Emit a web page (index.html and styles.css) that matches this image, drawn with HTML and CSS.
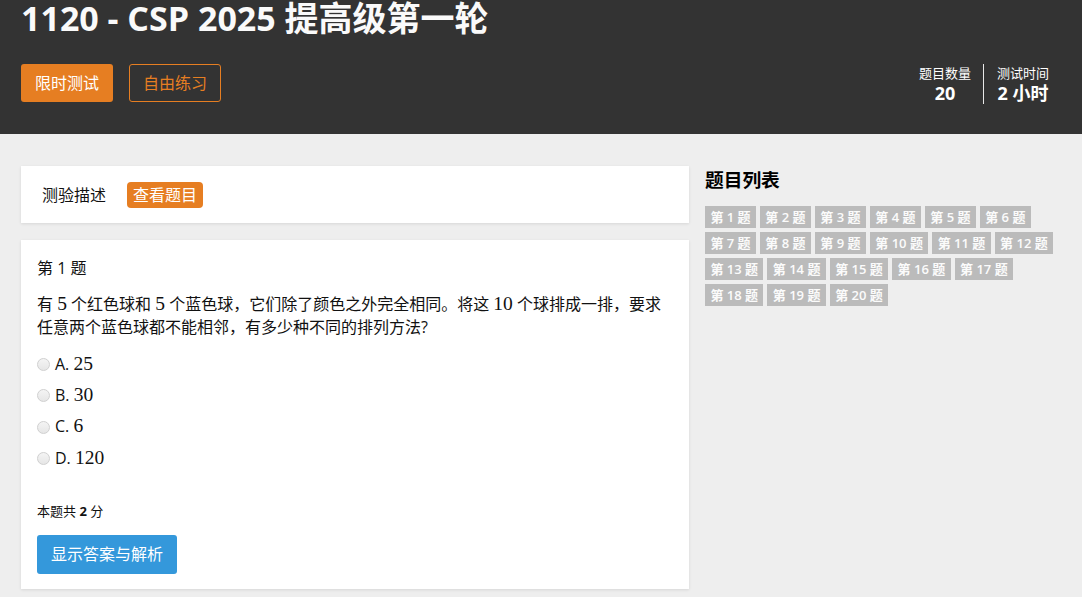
FILE: index.html
```html
<!DOCTYPE html>
<html lang="zh-CN">
<head>
<meta charset="utf-8">
<title>1120 - CSP 2025 提高级第一轮</title>
<link rel="stylesheet" href="styles.css">
</head>
<body>
<header class="hero">
  <h1 class="hero-title">1120 - CSP 2025 提高级第一轮</h1>
  <div class="hero-row">
    <div class="hero-actions">
      <button class="btn btn-solid">限时测试</button>
      <button class="btn btn-outline">自由练习</button>
    </div>
    <div class="stats">
      <div class="stat">
        <div class="stat-label">题目数量</div>
        <div class="stat-value">20</div>
      </div>
      <div class="stat stat-last">
        <div class="stat-label">测试时间</div>
        <div class="stat-value">2 小时</div>
      </div>
    </div>
  </div>
</header>
<main class="page">
  <section class="main-col">
    <div class="card tabs">
      <span class="tab">测验描述</span>
      <span class="tab tab-active">查看题目</span>
    </div>
    <div class="card question">
      <div class="q-title">第 1 题</div>
      <p class="q-text">有 <span class="m">5</span> 个红色球和 <span class="m">5</span> 个蓝色球，它们除了颜色之外完全相同。将这 <span class="m">10</span> 个球排成一排，要求任意两个蓝色球都不能相邻，有多少种不同的排列方法?</p>
      <div class="options">
        <label class="option"><input type="radio" name="q1"><span>A. <span class="m">25</span></span></label>
        <label class="option"><input type="radio" name="q1"><span>B. <span class="m">30</span></span></label>
        <label class="option"><input type="radio" name="q1"><span>C. <span class="m">6</span></span></label>
        <label class="option"><input type="radio" name="q1"><span>D. <span class="m">120</span></span></label>
      </div>
      <div class="score">本题共 <b>2</b> 分</div>
      <button class="btn btn-blue">显示答案与解析</button>
    </div>
  </section>
  <aside class="side-col">
    <h3 class="side-title">题目列表</h3>
    <div class="tags">
      <span class="tag">第 1 题</span><span class="tag">第 2 题</span><span class="tag">第 3 题</span><span class="tag">第 4 题</span><span class="tag">第 5 题</span><span class="tag">第 6 题</span><span class="tag">第 7 题</span><span class="tag">第 8 题</span><span class="tag">第 9 题</span><span class="tag">第 10 题</span><span class="tag">第 11 题</span><span class="tag">第 12 题</span><span class="tag">第 13 题</span><span class="tag">第 14 题</span><span class="tag">第 15 题</span><span class="tag">第 16 题</span><span class="tag">第 17 题</span><span class="tag">第 18 题</span><span class="tag">第 19 题</span><span class="tag">第 20 题</span>
    </div>
  </aside>
</main>
</body>
</html>
```

FILE: styles.css
```css
* { box-sizing: border-box; }
html, body { margin: 0; padding: 0; }
body {
  font-family: "Open Sans", "Noto Sans CJK SC", sans-serif;
  background: #eeeeee;
  color: #111;
  width: 1082px;
  height: 597px;
  overflow: hidden;
}

.hero {
  background: #333333;
  color: #fff;
  height: 134px;
  padding: 0 21px;
}
.hero-title {
  margin: 0;
  font-size: 34px;
  line-height: 36px;
  font-weight: 700;
  color: #fafafa;
}
.hero-row {
  margin-top: 26px;
  display: flex;
  align-items: center;
  justify-content: space-between;
}
.hero-actions { display: flex; gap: 16px; }

.btn {
  font-family: "Open Sans", "Noto Sans CJK SC", sans-serif;
  font-size: 16px;
  line-height: 22px;
  border-radius: 3px;
  cursor: pointer;
}
.btn-solid {
  background: #e67e22;
  color: #fff;
  border: 0;
  padding: 8px 14px;
}
.btn-outline {
  background: transparent;
  color: #e67e22;
  border: 1px solid #e67e22;
  padding: 7px 13px;
}
.btn-blue {
  background: #3498db;
  color: #fff;
  border: 0;
  padding: 8px 14px;
  line-height: 23px;
}

.stats { display: flex; margin-top: 2px; }
.stat {
  text-align: center;
  padding: 0 12px 0 13px;
}
.stat + .stat { border-left: 1px solid #e8e8e8; padding-left: 13px; }
.stat-last { padding-right: 12px; }
.stat-label { font-size: 13px; line-height: 18px; }
.stat-value { font-size: 18px; line-height: 22px; font-weight: 700; }

.page {
  display: flex;
  gap: 16px;
  padding: 32px 21px 0;
  align-items: flex-start;
}
.main-col { width: 668px; flex: none; }
.side-col { flex: 1; }

.card {
  background: #fff;
  box-shadow: 0 1px 3px rgba(0,0,0,0.10);
}
.tabs {
  height: 57px;
  display: flex;
  align-items: center;
  padding: 0 21px;
}
.tab { font-size: 16px; line-height: 22px; }
.tab-active {
  margin-left: 21px;
  background: #e67e22;
  color: #fff;
  border-radius: 4px;
  padding: 2px 6px 2px;
}

.question {
  margin-top: 17px;
  padding: 16px 16px 15px;
}
.q-title { font-size: 16px; line-height: 24px; }
.q-text {
  margin: 12px 0 0;
  font-size: 16px;
  line-height: 23px;
}
.m {
  font-family: "Liberation Serif", "DejaVu Serif", serif;
  font-size: 19.5px;
}
.options { margin-top: 9px; }
.option {
  display: flex;
  align-items: center;
  height: 31.3px;
  font-size: 16px;
}
.option input {
  -webkit-appearance: none;
  appearance: none;
  margin: 2px 5px 0 0;
  width: 13px;
  height: 13px;
  border: 1px solid #d0d0d0;
  border-radius: 50%;
  background: linear-gradient(#f4f4f4, #e6e6e6);
}
.score {
  margin-top: 29px;
  font-size: 13px;
  line-height: 18px;
}
.score b { font-weight: 700; }
.question .btn-blue { margin-top: 15px; display: block; }

.side-title {
  margin: 0 0 12px;
  font-size: 18.72px;
  line-height: 28px;
  font-weight: 700;
  color: #000;
}
.tags {
  display: flex;
  flex-wrap: wrap;
  gap: 4px 4px;
}
.tag {
  background: #bbbbbb;
  color: #fbfbfb;
  font-size: 13px;
  font-weight: 600;
  line-height: 22px;
  padding: 0 5.4px;
}
```
